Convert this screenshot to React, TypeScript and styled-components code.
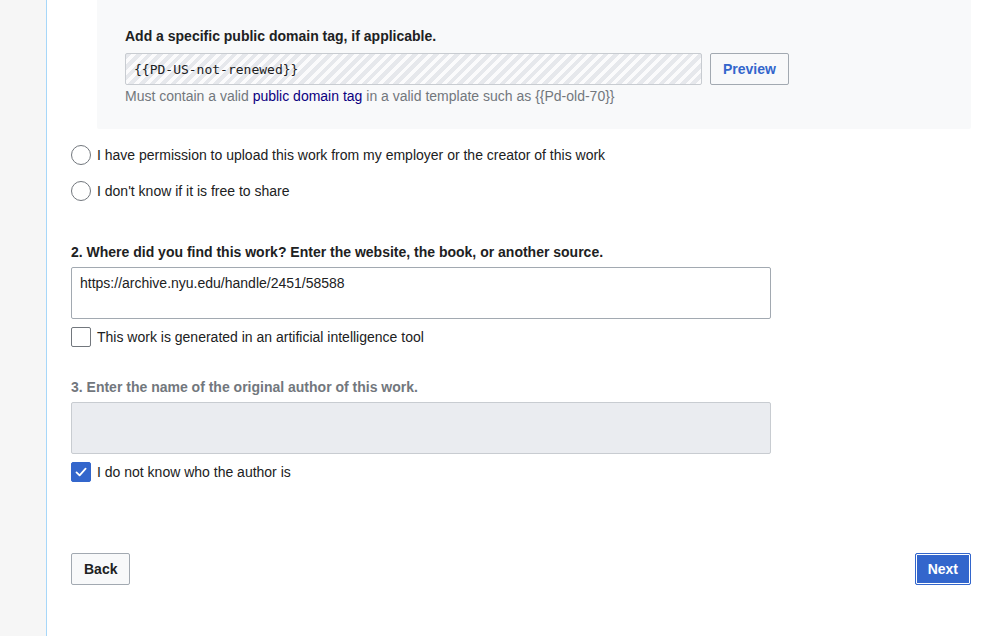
import styled, { createGlobalStyle } from "styled-components";

const GlobalStyle = createGlobalStyle`
  html, body {
    margin: 0;
    padding: 0;
    background: #ffffff;
  }
  body {
    font-family: "Liberation Sans", Arial, sans-serif;
    font-size: 14px;
    color: #202122;
  }
`;

const Page = styled.div`
  display: flex;
  min-height: 636px;
`;

const SideRail = styled.div`
  width: 46px;
  flex-shrink: 0;
  background-color: #f6f6f6;
  border-right: 1px solid #a7d7f9;
`;

const Main = styled.main`
  flex: 1;
  padding: 0 34px 0 24px;
`;

const TagPanel = styled.section`
  margin-left: 26px;
  padding: 26px 28px 23px;
  background-color: #f8f9fa;
  border-bottom-left-radius: 2px;
  border-bottom-right-radius: 2px;
`;

const Label = styled.div<{ $muted?: boolean }>`
  font-weight: 700;
  line-height: 20px;
  color: ${(p) => (p.$muted ? "#72777d" : "#202122")};
`;

const FieldRow = styled.div`
  display: flex;
  gap: 8px;
  margin-top: 7px;
`;

const StripedInput = styled.div`
  width: 577px;
  height: 32px;
  box-sizing: border-box;
  display: flex;
  align-items: center;
  padding: 0 8px;
  border: 1px solid #c8ccd1;
  border-radius: 2px;
  font-family: "DejaVu Sans Mono", "Liberation Mono", monospace;
  font-size: 13px;
  color: #202122;
  background-image: repeating-linear-gradient(
    135deg,
    #e6e8ec 0 4px,
    #fbfbfc 4px 7.5px
  );
`;

const Button = styled.button<{ $primary?: boolean; $link?: boolean }>`
  height: 32px;
  padding: 0 12px;
  box-sizing: border-box;
  font-family: "Liberation Sans", Arial, sans-serif;
  font-size: 14px;
  font-weight: 700;
  border-radius: 2px;
  cursor: pointer;
  border: 1px solid ${(p) => (p.$primary ? "#3366cc" : "#a2a9b1")};
  background-color: ${(p) => (p.$primary ? "#3366cc" : "#f8f9fa")};
  color: ${(p) => (p.$primary ? "#ffffff" : p.$link ? "#3366cc" : "#202122")};
  box-shadow: ${(p) => (p.$primary ? "inset 0 0 0 1px #ffffff" : "none")};
`;

const Help = styled.div`
  margin-top: 1px;
  line-height: 20px;
  color: #72777d;
`;

const HelpLink = styled.a`
  color: #0b0080;
  text-decoration: none;
`;

const OptionList = styled.div`
  display: flex;
  flex-direction: column;
  gap: 16px;
  margin-top: 16px;
`;

const Option = styled.label<{ $gap?: number }>`
  display: flex;
  align-items: center;
  gap: 6px;
  height: 20px;
  line-height: 20px;
  margin-top: ${(p) => p.$gap ?? 0}px;
`;

const Radio = styled.span`
  width: 20px;
  height: 20px;
  box-sizing: border-box;
  border: 1px solid #72777d;
  border-radius: 50%;
  background: #ffffff;
  flex-shrink: 0;
`;

const Box = styled.span<{ $checked?: boolean }>`
  width: 20px;
  height: 20px;
  box-sizing: border-box;
  border: 1px solid ${(p) => (p.$checked ? "#3366cc" : "#72777d")};
  border-radius: 2px;
  background: ${(p) => (p.$checked ? "#3366cc" : "#ffffff")};
  display: flex;
  align-items: center;
  justify-content: center;
  flex-shrink: 0;
`;

const Question = styled(Label)<{ $top: number }>`
  margin-top: ${(p) => p.$top}px;
`;

const TextField = styled.div<{ $disabled?: boolean }>`
  width: 700px;
  height: 52px;
  box-sizing: border-box;
  margin-top: 5px;
  padding: 6px 8px;
  line-height: 18px;
  border: 1px solid ${(p) => (p.$disabled ? "#c8ccd1" : "#a2a9b1")};
  border-radius: 2px;
  background: ${(p) => (p.$disabled ? "#eaecf0" : "#ffffff")};
`;

const Footer = styled.div`
  display: flex;
  justify-content: space-between;
  margin-top: 71px;
`;

const Check = () => (
  <svg width="14" height="14" viewBox="0 0 14 14" aria-hidden="true">
    <path
      d="M2.5 7.4 L5.6 10.4 L11.6 3.6"
      fill="none"
      stroke="#ffffff"
      strokeWidth="1.8"
      strokeLinecap="round"
      strokeLinejoin="round"
    />
  </svg>
);

export default function App() {
  return (
    <>
      <GlobalStyle />
      <Page>
        <SideRail />
        <Main>
          <TagPanel>
            <Label>Add a specific public domain tag, if applicable.</Label>
            <FieldRow>
              <StripedInput>{"{{PD-US-not-renewed}}"}</StripedInput>
              <Button $link>Preview</Button>
            </FieldRow>
            <Help>
              Must contain a valid <HelpLink href="#">public domain tag</HelpLink> in a
              valid template such as {"{{Pd-old-70}}"}
            </Help>
          </TagPanel>

          <OptionList>
            <Option>
              <Radio />
              I have permission to upload this work from my employer or the creator of this work
            </Option>
            <Option>
              <Radio />
              I don't know if it is free to share
            </Option>
          </OptionList>

          <Question $top={41}>
            2. Where did you find this work? Enter the website, the book, or another source.
          </Question>
          <TextField>https://archive.nyu.edu/handle/2451/58588</TextField>
          <Option $gap={8}>
            <Box />
            This work is generated in an artificial intelligence tool
          </Option>

          <Question $top={30} $muted>
            3. Enter the name of the original author of this work.
          </Question>
          <TextField $disabled />
          <Option $gap={8}>
            <Box $checked>
              <Check />
            </Box>
            I do not know who the author is
          </Option>

          <Footer>
            <Button>Back</Button>
            <Button $primary>Next</Button>
          </Footer>
        </Main>
      </Page>
    </>
  );
}
